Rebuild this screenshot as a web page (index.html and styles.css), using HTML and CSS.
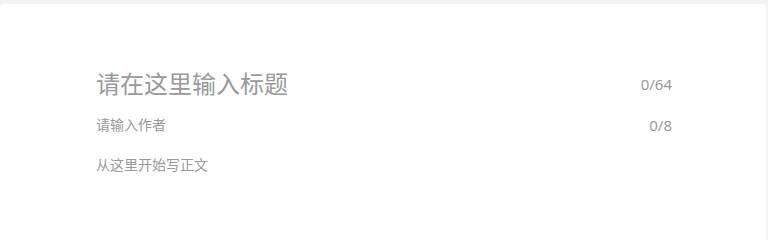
FILE: index.html
```html
<!DOCTYPE html>
<html lang="zh">
<head>
<meta charset="utf-8">
<link rel="stylesheet" href="styles.css">
</head>
<body>
<div class="card">
  <div class="row title-row">
    <span class="title">请在这里输入标题</span>
    <span class="count">0/64</span>
  </div>
  <div class="row author-row">
    <span class="author">请输入作者</span>
    <span class="count">0/8</span>
  </div>
  <div class="content">从这里开始写正文</div>
</div>
</body>
</html>
```

FILE: styles.css
```css
html, body {
  margin: 0;
  padding: 0;
  background: #f4f4f4;
  height: 100%;
  overflow: hidden;
}
body {
  font-family: "Noto Sans", "Noto Sans CJK SC", sans-serif;
  padding-top: 4px;
  box-sizing: border-box;
}
.card {
  background: #ffffff;
  border-radius: 4px 4px 0 0;
  margin-right: 2px;
  height: 100%;
  box-sizing: border-box;
  padding: 60px 94px 0 96px;
}
.row {
  display: flex;
  justify-content: space-between;
  align-items: center;
}
.title-row {
  height: 40px;
}
.title {
  font-size: 24px;
  color: #999999;
  line-height: 40px;
}
.count {
  font-size: 15px;
  color: #999999;
  line-height: 22px;
}
.author-row {
  margin-top: 10px;
  height: 22px;
}
.author {
  font-size: 14px;
  color: #999999;
  line-height: 22px;
}
.content {
  margin-top: 18px;
  font-size: 14px;
  line-height: 22px;
  color: #999999;
}
```
